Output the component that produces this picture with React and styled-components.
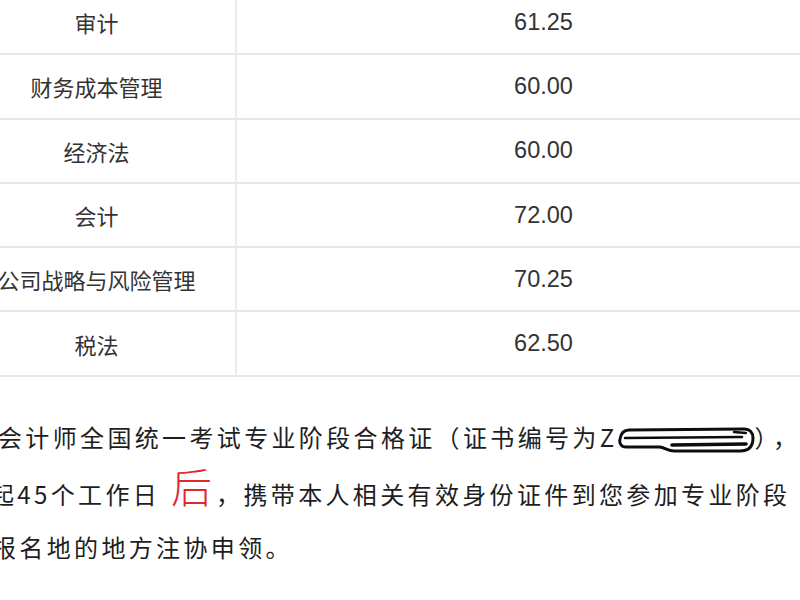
import React from 'react'
import styled, { createGlobalStyle } from 'styled-components';

const GlobalStyle = createGlobalStyle`
  html, body {
    margin: 0;
    padding: 0;
    background: #ffffff;
  }
  body {
    font-family: "Noto Sans CJK SC", "Noto Sans", sans-serif;
  }
`;

const Page = styled.div`
  width: 800px;
  height: 600px;
  overflow: hidden;
  background: #ffffff;
`;

const ScoreTable = styled.div`
  width: 892px;
  margin: -9px 0 0 -42px;
`;

const Row = styled.div`
  display: grid;
  grid-template-columns: 279px 1fr;
  height: 64.3px;
  box-sizing: border-box;
  border-bottom: 2px solid #e7e7e7;
`;

const Subject = styled.div`
  display: flex;
  align-items: center;
  justify-content: center;
  box-sizing: border-box;
  border-right: 2px solid #ececec;
  font-size: 22px;
  color: #333333;
`;

const Score = styled.div`
  display: flex;
  align-items: center;
  justify-content: center;
  font-family: "Liberation Sans", Arial, sans-serif;
  font-size: 23.5px;
  color: #333333;
`;

const Notice = styled.div`
  margin-top: 33px;
  font-size: 24px;
  line-height: 54px;
  letter-spacing: 3.35px;
  color: #1e1e1e;
`;

const Line = styled.div`
  white-space: nowrap;
  margin-left: ${({ shift }) => shift}px;
  margin-top: ${({ drop = 0 }) => drop}px;
`;

const RedMark = styled.span`
  display: inline-block;
  font-size: 41px;
  line-height: 40px;
  font-weight: 300;
  color: #e3262a;
  letter-spacing: 0;
  margin: 0 4px 0 11px;
  vertical-align: 1px;
`;

const Scribble = styled.svg`
  display: inline-block;
  vertical-align: -10px;
`;

const CloseParen = styled.span`
  margin-left: -3px;
  margin-right: 3px;
`;

const scores = [
  ['审计', '61.25'],
  ['财务成本管理', '60.00'],
  ['经济法', '60.00'],
  ['会计', '72.00'],
  ['公司战略与风险管理', '70.25'],
  ['税法', '62.50'],
];

function Redaction() {
  return (
    <Scribble width="140" height="34" viewBox="0 0 140 34" fill="none" stroke="#0d0d0d" strokeLinecap="round" strokeLinejoin="round">
      <path d="M11,7 L126,6 C132,6 135,10 135,15 C135,23 131,28 122,28 L56,28 C50,28 48,25 42,24 L8,24 C3,24 1,20 2,16 C3,10 6,7 11,7 Z" strokeWidth="3" />
      <path d="M7,15 L124,14" strokeWidth="2.6" />
      <path d="M54,22 L128,21" strokeWidth="3.6" />
      <path d="M116,9 L128,10" strokeWidth="2.4" />
    </Scribble>
  );
}

export default function App() {
  return (
    <Page>
      <GlobalStyle />
      <ScoreTable>
        {scores.map(([name, value]) => (
          <Row key={name}>
            <Subject>{name}</Subject>
            <Score>{value}</Score>
          </Row>
        ))}
      </ScoreTable>
      <Notice>
        <Line shift={-2}>
          会计师全国统一考试专业阶段合格证（证书编号为Z<Redaction /><CloseParen>）</CloseParen>，
        </Line>
        <Line shift={-10} drop={1}>
          起45个工作日<RedMark>后</RedMark>，携带本人相关有效身份证件到您参加专业阶段
        </Line>
        <Line shift={-8} drop={-1}>报名地的地方注协申领。</Line>
      </Notice>
    </Page>
  );
}
